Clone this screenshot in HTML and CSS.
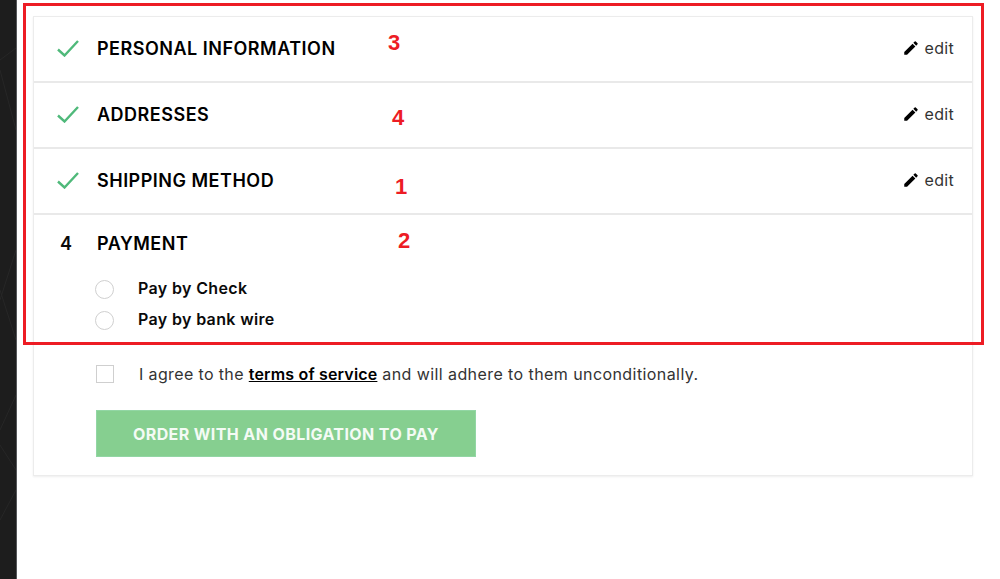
FILE: index.html
```html
<!DOCTYPE html>
<html lang="en">
<head>
  <meta charset="UTF-8" />
  <title>Checkout</title>
  <link rel="stylesheet" href="styles.css">
</head>
<body>
  <div class="side">
    <svg viewBox="0 0 16 579" preserveAspectRatio="none"><path d="M0 60 L16 48 M0 70 L16 130 M0 300 L16 250 M0 290 L16 340 M0 430 L16 395 M0 445 L16 470 M0 520 L16 490"/></svg>
  </div>
  <main class="page">
    <section class="checkout">
      <div class="step">
        <svg class="check" viewBox="0 0 22 17"><path d="M1 9.5 L7.5 15.5 L21 1" /></svg>
        <h2>PERSONAL INFORMATION</h2>
        <a class="edit"><svg viewBox="0 0 24 24"><path d="M3 17.25V21h3.75L17.81 9.94l-3.75-3.75L3 17.25zM20.71 7.04a1 1 0 0 0 0-1.41l-2.34-2.34a1 1 0 0 0-1.41 0l-1.83 1.83 3.75 3.75 1.83-1.83z"/></svg>edit</a>
      </div>
      <div class="step">
        <svg class="check" viewBox="0 0 22 17"><path d="M1 9.5 L7.5 15.5 L21 1" /></svg>
        <h2>ADDRESSES</h2>
        <a class="edit"><svg viewBox="0 0 24 24"><path d="M3 17.25V21h3.75L17.81 9.94l-3.75-3.75L3 17.25zM20.71 7.04a1 1 0 0 0 0-1.41l-2.34-2.34a1 1 0 0 0-1.41 0l-1.83 1.83 3.75 3.75 1.83-1.83z"/></svg>edit</a>
      </div>
      <div class="step">
        <svg class="check" viewBox="0 0 22 17"><path d="M1 9.5 L7.5 15.5 L21 1" /></svg>
        <h2>SHIPPING METHOD</h2>
        <a class="edit"><svg viewBox="0 0 24 24"><path d="M3 17.25V21h3.75L17.81 9.94l-3.75-3.75L3 17.25zM20.71 7.04a1 1 0 0 0 0-1.41l-2.34-2.34a1 1 0 0 0-1.41 0l-1.83 1.83 3.75 3.75 1.83-1.83z"/></svg>edit</a>
      </div>
      <div class="payment">
        <div class="payment-head">
          <span class="num">4</span>
          <h2>PAYMENT</h2>
        </div>
        <div class="option"><span class="radio"></span><span class="option-label">Pay by Check</span></div>
        <div class="option"><span class="radio"></span><span class="option-label">Pay by bank wire</span></div>
        <div class="agree">
          <span class="box"></span>
          <span>I agree to the <a class="terms">terms of service</a> <span class="tail">and will adhere to them unconditionally.</span></span>
        </div>
        <button class="order">ORDER WITH AN OBLIGATION TO PAY</button>
      </div>
    </section>
  </main>

  <!-- annotation drawn on top of the screenshot -->
  <div class="mark-box"></div>
  <span class="mark n3">3</span>
  <span class="mark n4">4</span>
  <span class="mark n1">1</span>
  <span class="mark n2">2</span>
</body>
</html>
```

FILE: styles.css
```css
body {
  margin: 0;
  height: 579px;
  overflow: hidden;
  display: flex;
  background: #fff;
  font-family: 'Inter', sans-serif;
  color: #0a0a0a;
}

.side {
  width: 17px;
  background: #1d1d1d;
  border-right: 1px solid #55575a;
  box-sizing: border-box;
}

.side svg {
  display: block;
  width: 100%;
  height: 100%;
  fill: none;
  stroke: #272727;
  stroke-width: 1;
}

.page {
  flex: 1;
  padding: 16px 27px 0 16px;
}

.checkout {
  border: 1px solid #ececec;
  box-shadow: 0 1px 2px rgba(0, 0, 0, 0.07);
  height: 460px;
  box-sizing: border-box;
}

.step {
  height: 66px;
  box-sizing: border-box;
  border-bottom: 2px solid #e9e9e9;
  display: flex;
  align-items: center;
  padding: 0 18px 1px 23px;
}

.check {
  width: 22px;
  height: 17px;
  margin-right: 18px;
  fill: none;
  stroke: #4fb97a;
  stroke-width: 2.4;
}

h2 {
  margin: 0;
  font-size: 18px;
  font-weight: 600;
  letter-spacing: 0.5px;
  color: #000;
}

.edit {
  margin-left: auto;
  display: flex;
  align-items: center;
  gap: 5px;
  padding-bottom: 2px;
  font-size: 16px;
  letter-spacing: 0.3px;
  color: #333;
}

.edit svg {
  width: 18px;
  height: 18px;
  fill: #000;
}

.payment {
  padding: 0 0 0 23px;
}

.payment-head {
  display: flex;
  align-items: center;
  height: 58px;
  padding-bottom: 2px;
  box-sizing: border-box;
}

.num {
  width: 40px;
  padding-left: 3px;
  box-sizing: border-box;
  font-size: 18px;
  font-weight: 600;
}

.option {
  display: flex;
  align-items: center;
  height: 31px;
  margin-left: 38px;
}

.radio {
  width: 19px;
  height: 19px;
  border: 1px solid #d0d0d0;
  border-radius: 50%;
  box-sizing: border-box;
  margin-right: 24px;
  position: relative;
  top: 1px;
}

.option-label {
  font-size: 16px;
  font-weight: 600;
  letter-spacing: 0.35px;
  position: relative;
  top: -1px;
}

.agree {
  display: flex;
  align-items: center;
  margin: 29px 0 0 39px;
  font-size: 16px;
  letter-spacing: 0.37px;
  color: #333;
}

.box {
  width: 18px;
  height: 18px;
  border: 1px solid #cfcfcf;
  box-sizing: border-box;
  margin-right: 25px;
}

.terms {
  font-weight: 600;
  letter-spacing: 0.17px;
  color: #000;
  text-decoration: underline;
}

.tail {
  letter-spacing: 0.42px;
}

.order {
  display: block;
  margin: 26px 0 0 39px;
  width: 380px;
  height: 47px;
  border: 1px solid #92d6a4;
  background: #86cf90;
  color: #f4fbf5;
  font-family: inherit;
  font-size: 16px;
  font-weight: 700;
  letter-spacing: 0.4px;
}

.mark-box {
  position: absolute;
  left: 23px;
  top: 3px;
  width: 955px;
  height: 336px;
  border: 3px solid #ed1c24;
}

.mark {
  position: absolute;
  color: #ed1c24;
  font-family: 'Liberation Sans', sans-serif;
  font-size: 22px;
  font-weight: 700;
}

.n3 { left: 388px; top: 30px; }
.n4 { left: 392px; top: 105px; }
.n1 { left: 395px; top: 174px; }
.n2 { left: 398px; top: 228px; }
```
